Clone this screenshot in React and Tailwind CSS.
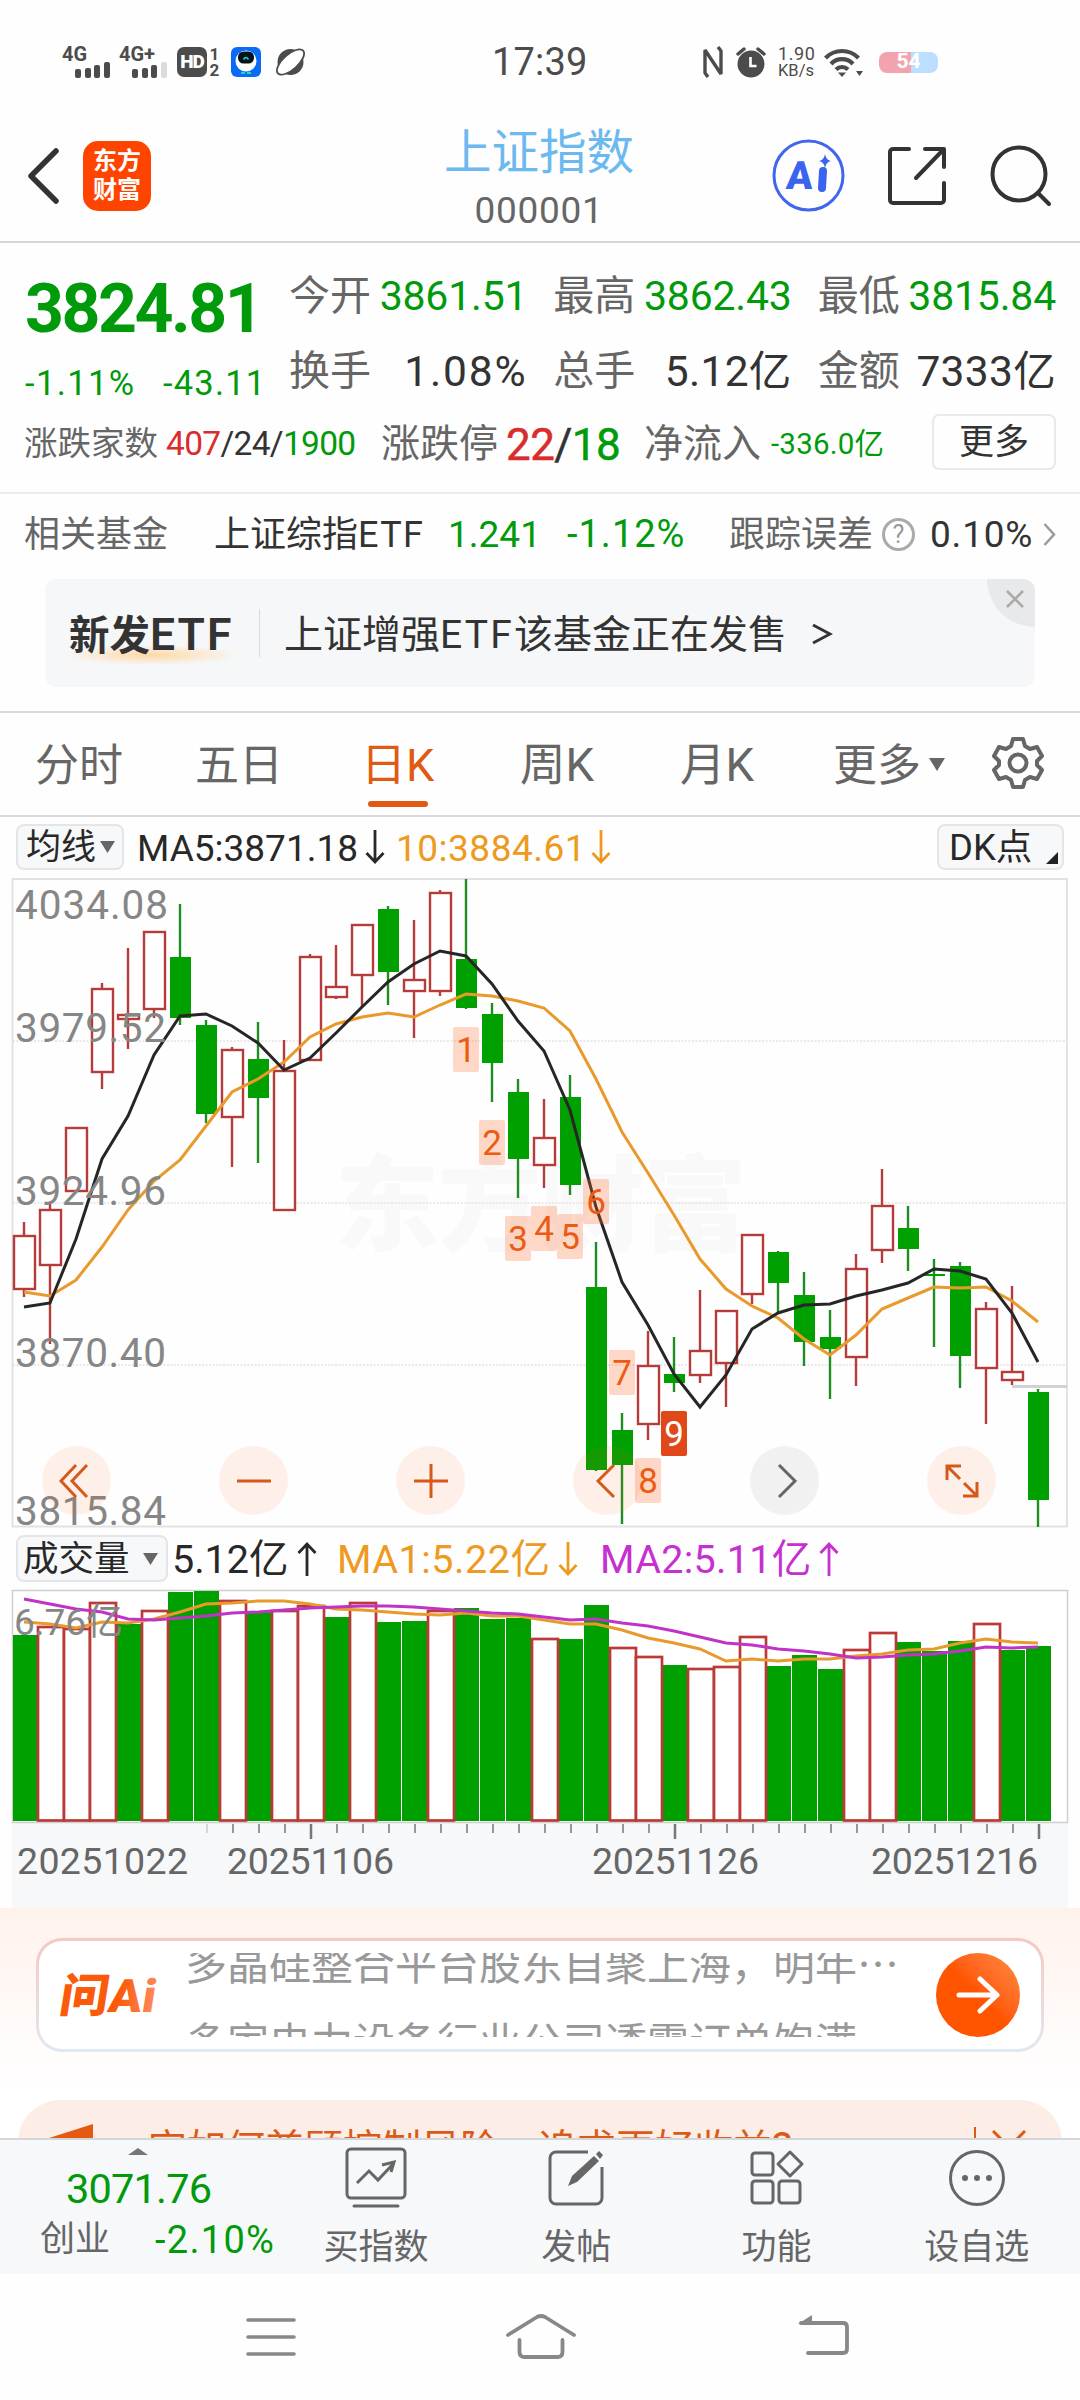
const STEP = 26;
const cx = (i) => 24 + STEP * i;

// [up, high, bodyTop, bodyBottom, low] in chart pixels
const candles = [
  [1, 1222, 1236, 1289, 1297], [1, 1203, 1210, 1265, 1344], [1, 1128, 1128, 1191, 1191],
  [1, 983, 989, 1072, 1089], [1, 948, 1015, 1019, 1049], [1, 932, 932, 1009, 1018],
  [0, 904, 957, 1018, 1025], [0, 1020, 1025, 1114, 1123], [1, 1047, 1050, 1117, 1167],
  [0, 1022, 1059, 1098, 1163], [1, 1040, 1071, 1210, 1210], [1, 954, 957, 1060, 1060],
  [1, 945, 987, 997, 999], [1, 924, 925, 975, 1007], [0, 906, 909, 972, 1005],
  [1, 920, 980, 991, 1038], [1, 890, 893, 991, 996], [0, 879, 959, 1008, 1009],
  [0, 1003, 1014, 1063, 1102], [0, 1079, 1092, 1159, 1198], [1, 1099, 1138, 1165, 1188],
  [0, 1075, 1097, 1185, 1195], [0, 1242, 1287, 1470, 1471], [0, 1413, 1430, 1465, 1524],
  [1, 1331, 1366, 1424, 1440], [0, 1337, 1374, 1383, 1392], [1, 1290, 1351, 1375, 1383],
  [1, 1310, 1311, 1363, 1407], [1, 1234, 1235, 1294, 1304], [0, 1251, 1252, 1283, 1313],
  [0, 1272, 1295, 1342, 1366], [0, 1310, 1337, 1349, 1399], [1, 1254, 1269, 1357, 1386],
  [1, 1169, 1206, 1250, 1263], [0, 1206, 1228, 1249, 1271], [0, 1259, 1274, 1276, 1347],
  [0, 1262, 1266, 1356, 1388], [1, 1302, 1309, 1368, 1424], [1, 1286, 1372, 1380, 1385],
  [0, 1389, 1392, 1500, 1527],
];

const ma5 = [1307, 1303, 1239, 1159, 1116, 1055, 1016, 1014, 1026, 1043, 1070, 1058, 1033, 1007, 982, 964, 951, 956, 984, 1021, 1051, 1110, 1207, 1282, 1325, 1374, 1407, 1375, 1329, 1313, 1305, 1304, 1296, 1290, 1283, 1269, 1271, 1279, 1313, 1362];
const ma10 = [1292, 1296, 1280, 1247, 1210, 1181, 1160, 1126, 1092, 1079, 1062, 1037, 1024, 1017, 1013, 1017, 1005, 994, 996, 1001, 1008, 1031, 1079, 1132, 1173, 1215, 1259, 1289, 1306, 1318, 1339, 1355, 1335, 1309, 1298, 1287, 1288, 1287, 1301, 1322];

const volumes = [
  [0, 1635], [1, 1627], [1, 1629], [1, 1603], [0, 1624], [1, 1611], [0, 1592], [0, 1591], [1, 1601], [0, 1612],
  [1, 1611], [1, 1606], [0, 1617], [1, 1603], [0, 1622], [0, 1621], [1, 1611], [0, 1608], [0, 1619], [0, 1618],
  [1, 1639], [0, 1639], [0, 1605], [1, 1648], [1, 1657], [0, 1665], [1, 1669], [1, 1667], [1, 1637], [0, 1666],
  [0, 1655], [0, 1669], [1, 1650], [1, 1633], [0, 1642], [0, 1651], [0, 1641], [1, 1624], [0, 1650], [0, 1646],
];
const volMa1 = [1622, 1624, 1628, 1622, 1623, 1619, 1612, 1604, 1603, 1601, 1601, 1604, 1609, 1610, 1612, 1614, 1615, 1613, 1616, 1616, 1620, 1624, 1624, 1630, 1638, 1643, 1649, 1661, 1659, 1661, 1659, 1659, 1656, 1654, 1650, 1649, 1643, 1639, 1642, 1643];
const volMa2 = [1599, 1604, 1609, 1612, 1619, 1620, 1618, 1616, 1613, 1612, 1610, 1608, 1607, 1606, 1606, 1607, 1609, 1611, 1613, 1614, 1617, 1620, 1619, 1623, 1626, 1631, 1637, 1643, 1645, 1649, 1651, 1654, 1658, 1657, 1655, 1654, 1651, 1647, 1648, 1647];

const line = (ys) => ys.map((y, i) => `${cx(i)},${y}`).join(" ");

const priceLabels = [["4034.08", 918.5], ["3979.52", 1042], ["3924.96", 1204.5], ["3870.40", 1366.5], ["3815.84", 1524.5]];
const marks = [[17, 1027], [18, 1120], [19, 1216], [20, 1206], [21, 1214], [22, 1179], [23, 1350], [24, 1458], [25, 1411]];
const dates = [["20251022", 17, 171], ["20251106", 227, 167], ["20251126", 592, 167], ["20251216", 871, 167]];

function Signal({ label, weak }) {
  return (
    <svg className="overflow-visible" width="50" height="32" viewBox="0 0 50 32" fill="#4c4c4c">
      <text x="0" y="15" fontSize="20" fontWeight="700" textLength={label.length > 2 ? 36 : 25} lengthAdjust="spacingAndGlyphs">{label}</text>
      <rect x="13" y="23" width="6" height="9" rx="2" />
      <rect x="23" y="22" width="6" height="10" rx="2" />
      <rect x="32" y="19" width="6" height="13" rx="2" />
      <rect x="42" y="16" width="6" height="16" rx="2" fill={weak ? "#dcdcdc" : "#4c4c4c"} />
    </svg>
  );
}

function StatusBar() {
  return (
    <div className="flex h-[124px] items-center pl-[62px] pr-[142px] text-[#4c4c4c]">
      <div className="flex w-[430px] items-center">
        <Signal label="4G" />
        <div className="ml-[7px]"><Signal label="4G+" weak /></div>
        <div className="ml-2 flex h-[30px] w-[30px] items-center justify-center rounded-[7px] bg-[#4c4c4c] text-[19px] font-black tracking-[-1px] text-white">HD</div>
        <div className="ml-[2px] w-[11px] text-center text-[17px] font-bold leading-[16px]">1<br />2</div>
        <svg className="ml-[11px]" width="30" height="30" viewBox="0 0 30 30">
          <rect width="30" height="30" rx="6" fill="#0a6cf5" />
          <circle cx="15" cy="14" r="10.500" fill="#fff" />
          <rect x="7" y="4.500" width="16" height="12" rx="5.500" fill="#06121c" />
          <path d="M12.500 12.500q2.500-4 5 0" fill="none" stroke="#18d8c8" strokeWidth="1.500" />
          <path d="M10 25h4v2h-4zM16 25h4v2h-4z" fill="#18d8c8" />
        </svg>
        <svg className="ml-[14px]" width="31" height="30" viewBox="0 0 31 30">
          <circle cx="15.500" cy="15" r="13" fill="#4c4c4c" />
          <ellipse cx="15.500" cy="15" rx="17" ry="7.500" transform="rotate(-42 15.500 15)" fill="#fff" stroke="#4c4c4c" strokeWidth="1.800" />
        </svg>
      </div>
      <span className="text-[38px] leading-none tracking-[0.200px]">17:39</span>
      <div className="ml-auto flex items-center">
        <svg width="20" height="32" viewBox="0 0 20 32" fill="none" stroke="#4c4c4c" strokeWidth="3.400">
          <path d="M5 31L2 27V4l16 24V5L15 1" strokeLinejoin="bevel" />
        </svg>
        <svg className="ml-[13px]" width="30" height="32" viewBox="0 0 30 32">
          <circle cx="15" cy="18" r="13.500" fill="#4c4c4c" />
          <path d="M2 8l6-5M28 8l-6-5" stroke="#4c4c4c" strokeWidth="3.500" strokeLinecap="round" />
          <path d="M14.500 11v9h6" fill="none" stroke="#fff" strokeWidth="2.600" />
        </svg>
        <div className="ml-[12px] w-[36px] text-center text-[18px] leading-[17px]">
          <div className="tracking-[0.600px]">1.90</div>
          <div className="text-[16.500px]">KB/s</div>
        </div>
        <svg className="ml-[10px]" width="40" height="30" viewBox="0 0 40 30" fill="none" stroke="#4c4c4c" strokeWidth="4.200">
          <path d="M1.500 11a23 23 0 0 1 33 0" />
          <path d="M7 17a15 15 0 0 1 22 0" />
          <path d="M12 22.500a8.500 8.500 0 0 1 12 0" />
          <path d="M14 25.500h8l-4 4.500z" fill="#4c4c4c" stroke="none" />
          <path d="M32 24h7l-3.500 5z" fill="#4c4c4c" stroke="none" />
        </svg>
        <div className="ml-[15px] flex h-[21px] w-[59px] items-center justify-center rounded-[8px] bg-linear-to-r from-[#f3a3b0] from-55% to-[#bddfff] to-55% text-[21px] font-bold text-white">54</div>
      </div>
    </div>
  );
}

function Header() {
  return (
    <header className="grid h-[119px] grid-cols-3 items-start border-b-2 border-[#d6d6d6]">
      <div className="flex h-[103px] items-center pl-[27px]">
        <svg width="32" height="56" viewBox="0 0 32 56" fill="none" stroke="#333" strokeWidth="5.500" strokeLinecap="round" strokeLinejoin="round">
          <path d="M29 3L4 28l25 25" />
        </svg>
        <div className="ml-[24px] flex h-[70px] w-[68px] flex-col items-center justify-center rounded-[15px] bg-[#ff4400] text-[24px] font-bold leading-[29px] text-white">
          <span>东方</span>
          <span>财富</span>
        </div>
      </div>
      <div className="mt-[3px] pr-[2px] text-center">
        <h1 className="text-[47.500px] leading-[52px] text-[#6cb9f0]">上证指数</h1>
        <p className="mt-[10px] text-[37px] leading-[44px] tracking-[0.700px] text-[#666]">000001</p>
      </div>
      <div className="flex h-[103px] items-center justify-end pr-[28px]">
        <svg className="mr-[1px]" width="73" height="73" viewBox="0 0 73 73">
          <circle cx="36.500" cy="36.500" r="34.500" fill="none" stroke="#3f66ec" strokeWidth="3" />
          <text x="14" y="50" fontSize="39" fontWeight="900" fill="#3a63f0" transform="skewX(-4) translate(3 0)">A</text>
          <path d="M51 32l-1 17" stroke="#3a63f0" strokeWidth="8" strokeLinecap="round" />
          <path d="M53 15q1 6 6 7q-5 1-6 7q-1-6-6-7q5-1 6-7z" fill="#3a63f0" />
        </svg>
        <svg className="ml-[42px]" width="58" height="58" viewBox="0 0 58 58" fill="none" stroke="#333" strokeWidth="4" strokeLinecap="round" strokeLinejoin="round">
          <path d="M21 2H5a3 3 0 0 0-3 3v48a3 3 0 0 0 3 3h48a3 3 0 0 0 3-3V36" />
          <path d="M37 2h19v18M55 3L28 31" />
        </svg>
        <svg className="ml-[44px]" width="62" height="62" viewBox="0 0 62 62" fill="none" stroke="#333" strokeWidth="4" strokeLinecap="round">
          <circle cx="29" cy="29" r="26.500" />
          <path d="M48 48l11 11" />
        </svg>
      </div>
    </header>
  );
}

function Stat({ label, value, green }) {
  return (
    <div className="flex h-[50px] items-center justify-between">
      <span className="text-[41px] text-[#666]">{label}</span>
      <span className={green ? "text-[41px] tracking-[-0.200px] text-[#009a0a]" : "text-[42.500px] tracking-[0.300px] text-[#333]"}>{value}</span>
    </div>
  );
}

function Quote() {
  return (
    <section className="h-[251px] border-b-2 border-[#ececec]">
      <div className="flex h-[171px]">
        <div className="w-[289px] pl-[25px] text-[#009a0a]">
          <div className="mt-[36px] text-[68px] font-bold leading-[60px] tracking-[-2.500px]">3824.81</div>
          <div className="mt-[22px] flex text-[34.500px] leading-[44px]">
            <span className="w-[138px] tracking-[1.400px]">-1.11%</span>
            <span className="tracking-[1.200px]">-43.11</span>
          </div>
        </div>
        <div className="mt-[29px] grid w-[767px] grid-cols-3 content-start gap-x-[26px] gap-y-[25px]">
          <Stat label="今开" value="3861.51" green />
          <Stat label="最高" value="3862.43" green />
          <Stat label="最低" value="3815.84" green />
          <Stat label="换手" value={<span className="tracking-[1.800px]">1.08%</span>} />
          <Stat label="总手" value="5.12亿" />
          <Stat label="金额" value="7333亿" />
        </div>
      </div>
      <div className="flex h-[56px] items-center pl-[24px] pr-[24px] text-[#666]">
        <span className="w-[142px] pt-[5px] text-[33.500px]">涨跌家数</span>
        <span className="w-[215px] pt-[5px] text-[33.500px] tracking-[-0.700px] text-[#333]">
          <span className="text-[#d92c2c]">407</span>/24/<span className="text-[#009a0a]">1900</span>
        </span>
        <span className="w-[125px] pt-[5px] text-[39px]">涨跌停</span>
        <span className="w-[138px] pt-[5px] text-[44px] tracking-[-0.600px] text-[#333] [-webkit-text-stroke:0.500px]">
          <span className="text-[#d92c2c]">22</span>/<span className="text-[#009a0a]">18</span>
        </span>
        <span className="w-[127px] pt-[5px] text-[39px]">净流入</span>
        <span className="pt-[5px] text-[29.500px] tracking-[0.200px] text-[#009a0a]">-336.0亿</span>
        <span className="ml-auto flex h-[56px] w-[124px] items-center justify-center rounded-[7px] border-2 border-[#e8e9eb] pt-[3px] text-[35px] text-[#333]">更多</span>
      </div>
    </section>
  );
}

function FundRow() {
  return (
    <section>
      <div className="flex h-[80px] items-center pl-[24px] pr-[24px] pt-[1px] text-[36px] text-[#333]">
        <span className="w-[190px] text-[#666]">相关基金</span>
        <span className="w-[234px]">上证综指<span className="tracking-[1.300px]">ETF</span></span>
        <span className="w-[119px] text-[37px] text-[#009a0a]">1.241</span>
        <span className="w-[162px] text-[38px] tracking-[1px] text-[#009a0a]">-1.12%</span>
        <span className="w-[153px] text-[#666]">跟踪误差</span>
        <span className="flex h-[33px] w-[33px] items-center justify-center rounded-full border-[3px] border-[#aaa] text-[25px] text-[#999]">?</span>
        <span className="ml-[15px] text-[37px] tracking-[0.800px]">0.10%</span>
        <svg className="ml-auto" width="13" height="25" viewBox="0 0 13 25" fill="none" stroke="#999" strokeWidth="2.500">
          <path d="M1.500 2l9.500 10.500L1.500 23" />
        </svg>
      </div>
      <div className="relative mx-[45px] mt-[5px] flex h-[108px] items-center overflow-hidden rounded-[12px] bg-[#f6f7f9] pl-[24px] text-[#333]">
        <div className="relative w-[190px] pt-[4px] text-[40.500px] font-bold">
          <div className="absolute bottom-[4px] left-[2px] h-[18px] w-[160px] bg-radial-[ellipse_at_center] from-[#ffd8a4] to-[#f6f7f9] to-80%" />
          <span className="relative">新发<span className="text-[44.500px] font-semibold tracking-[2px]">ETF</span></span>
        </div>
        <div className="h-[48px] w-px bg-[#dadada]" />
        <span className="ml-[24px] pt-[4px] text-[39px]">上证增强<span className="tracking-[2.200px]">ETF</span>该基金正在发售</span>
        <svg className="ml-[24px] mt-[2px]" width="22" height="22" viewBox="0 0 22 22" fill="none" stroke="#333" strokeWidth="3">
          <path d="M2 2l17 9-17 9" />
        </svg>
        <div className="absolute right-0 top-0 flex h-[48px] w-[48px] items-center justify-center rounded-bl-[48px] bg-[#e8e9ea] pb-[8px] pl-[8px]">
          <svg width="18" height="18" viewBox="0 0 18 18" stroke="#aaa" strokeWidth="2.500">
            <path d="M1 1l16 16M17 1L1 17" />
          </svg>
        </div>
      </div>
    </section>
  );
}

function Tabs() {
  return (
    <nav className="mt-[24px] flex h-[106px] items-center border-y-2 border-[#d9d9d9] pl-[35px] pr-[35px] text-[44px] text-[#666]">
      <span className="w-[160px] pt-[4px]">分时</span>
      <span className="w-[166px] pt-[4px]">五日</span>
      <span className="relative flex h-full w-[159px] items-center pt-[4px] text-[45px] text-[#e05a14]">
        日K
        <i className="absolute bottom-[8px] left-[7px] h-[6px] w-[60px] rounded-full bg-[#e05a14]" />
      </span>
      <span className="w-[160px] pt-[4px] text-[45.500px]">周K</span>
      <span className="w-[153px] pt-[4px] text-[45.500px]">月K</span>
      <span className="pt-[4px]">更多</span>
      <svg className="ml-[8px]" width="16" height="13" viewBox="0 0 16 13"><path d="M0 0h16L8 13z" fill="#666" /></svg>
      <svg className="ml-auto mb-[2px]" width="54" height="54" viewBox="0 0 54 54" fill="none" stroke="#666" strokeWidth="4" strokeLinejoin="round">
        <path d="M22 3h10l2 7 5 3 7-2 5 9-5 5v4l5 5-5 9-7-2-5 3-2 7H22l-2-7-5-3-7 2-5-9 5-5v-4l-5-5 5-9 7 2 5-3z" />
        <circle cx="27" cy="27" r="8.500" />
      </svg>
    </nav>
  );
}

function Arrow({ up }) {
  return (
    <svg className="shrink-0" width="20" height="36" viewBox="0 0 20 36" fill="none" stroke="currentColor" strokeWidth="2.800">
      <path d={up ? "M10 35V3M1.500 12L10 3l8.500 9" : "M10 1v32M1.500 24l8.500 9 8.500-9"} />
    </svg>
  );
}

function MaRow() {
  return (
    <div className="flex h-[60px] items-center pl-[16px] pr-[16px] text-[37px] text-[#282828]">
      <span className="flex h-[46px] w-[108px] items-center rounded-[8px] border-2 border-[#e3e5e8] bg-[#f7f8fa] pl-[8px] pt-[3px] text-[35px]">
        均线
        <svg className="ml-[4px] mb-[3px]" width="15" height="12" viewBox="0 0 15 12"><path d="M0 0h15L7.500 12z" fill="#666" /></svg>
      </span>
      <span className="ml-[13px] w-[228px] pt-[3px]">MA5:3871.18</span>
      <Arrow />
      <span className="ml-[11px] w-[195px] pt-[3px] tracking-[0.500px] text-[#ee9a20]">10:3884.61</span>
      <span className="text-[#ee9a20]"><Arrow /></span>
      <span className="relative ml-auto flex h-[46px] w-[127px] items-center rounded-[8px] border-2 border-[#e3e5e8] bg-[#f7f8fa] pl-[10px] pt-[3px] text-[36.500px]">
        DK点
        <svg className="absolute bottom-[4px] right-[4px]" width="12" height="12" viewBox="0 0 12 12"><path d="M12 0v12H0z" fill="#222" /></svg>
      </span>
    </div>
  );
}

function RoundButton({ gray, children }) {
  return (
    <div className={gray ? "flex h-[69px] w-[69px] items-center justify-center rounded-full bg-black/5" : "flex h-[69px] w-[69px] items-center justify-center rounded-full bg-[#ff5a0a]/[0.085]"}>
      <svg width="36" height="36" viewBox="0 0 36 36" fill="none" stroke={gray ? "#666" : "#d45a1c"} strokeWidth="3">
        {children}
      </svg>
    </div>
  );
}

function PriceChart() {
  return (
    <div className="relative h-[652px]">
      <svg width="1080" height="652" viewBox="0 877 1080 652">
        <text x="335" y="1243" fontSize="104" fontWeight="900" fill="#f9f9f9" textLength="412">东方财富</text>
        {[1041, 1203, 1365].map((y) => (
          <path key={y} d={`M13 ${y}H1067`} stroke="#e2e2e2" strokeWidth="1.500" strokeDasharray="2 1.500" />
        ))}
        <rect x="12.500" y="879" width="1054.500" height="647.500" fill="none" stroke="#e2e2e2" strokeWidth="2" />
        <path d="M1012 1386.500H1067" stroke="#cfd3d6" strokeWidth="3" />
        {candles.map(([up, hi, top, bottom, lo], i) => {
          const x = cx(i);
          return up ? (
            <g key={i} stroke="#b53c3a" strokeWidth="2.400">
              <path d={`M${x} ${hi}V${top}M${x} ${bottom}V${lo}`} />
              <rect x={x - 10} y={top} width="21" height={bottom - top} fill="#fff" />
            </g>
          ) : (
            <g key={i} fill="#00a000">
              <path d={`M${x} ${hi}V${lo}`} stroke="#1e8e22" strokeWidth="2.400" />
              <rect x={x - 10} y={top} width="21" height={bottom - top} />
            </g>
          );
        })}
        <polyline points={line(ma10)} fill="none" stroke="#e89a2c" strokeWidth="3" />
        <polyline points={line(ma5)} fill="none" stroke="#262626" strokeWidth="3" />
        {priceLabels.map(([t, y]) => (
          <text key={t} x="15" y={y} fontSize="40.500" fill="#868686" textLength={t === "4034.08" ? 153 : 151}>{t}</text>
        ))}
        {marks.map(([i, y], n) => (
          <g key={i}>
            <rect x={cx(i) - 13} y={y} width="26" height="45" rx="2" fill={n === 8 ? "#e0481a" : "#ff6a2a"} fillOpacity={n === 8 ? 1 : 0.26} />
            <text x={cx(i)} y={y + 35} fontSize="35" textAnchor="middle" fill={n === 8 ? "#fff" : "#ea5c14"}>{n + 1}</text>
          </g>
        ))}
      </svg>
      <div className="absolute left-[42px] top-[569px] flex gap-[108px]">
        <RoundButton><path d="M17 2L2 18l15 16M28 2L13 18l15 16" /></RoundButton>
        <RoundButton><path d="M1 18h34" /></RoundButton>
        <RoundButton><path d="M1 18h34M18 1v34" /></RoundButton>
        <RoundButton><path d="M24 2L8 18l16 16" /></RoundButton>
        <RoundButton gray><path d="M12 2l16 16-16 16" /></RoundButton>
        <RoundButton><path d="M3 17V3h14M3 3l13 13M33 19v14H19M33 33L20 20" /></RoundButton>
      </div>
    </div>
  );
}

function VolumeRow() {
  return (
    <div className="flex h-[59px] items-center pl-[16px] text-[39.500px] text-[#282828]">
      <span className="flex h-[47px] w-[152px] items-center rounded-[8px] border-2 border-[#e3e5e8] bg-[#f7f8fa] pl-[5px] pt-[3px] text-[35.500px]">
        成交量
        <svg className="ml-[13px] mb-[3px]" width="15" height="12" viewBox="0 0 15 12"><path d="M0 0h15L7.500 12z" fill="#666" /></svg>
      </span>
      <span className="ml-[4px] w-[125px] pt-[3px]">5.12亿</span>
      <Arrow up />
      <span className="ml-[20px] flex w-[243px] items-center text-[#ee9a20]">
        <span className="w-[221px] pt-[3px] tracking-[0.500px]">MA1:5.22亿</span>
        <Arrow />
      </span>
      <span className="ml-[20px] flex items-center text-[#c62fd0]">
        <span className="w-[219px] pt-[3px] tracking-[0.300px]">MA2:5.11亿</span>
        <Arrow up />
      </span>
    </div>
  );
}

function VolumeChart() {
  return (
    <svg className="block" width="1080" height="320" viewBox="0 1588 1080 320">
      <rect x="12" y="1823" width="1056" height="85" fill="#f7f8fa" />
      <rect x="12.500" y="1590.500" width="1055" height="232" fill="#fff" stroke="#cfcfcf" strokeWidth="1.500" />
      {volumes.map(([up, y], i) =>
        up ? null : <rect key={i} x={i ? cx(i) - 12 : 13} y={y} width={i ? 25 : 24} height={1821 - y} fill="#00a000" />
      )}
      {volumes.map(([up, y], i) =>
        up ? <rect key={i} x={cx(i) - 12} y={y} width="26" height={1820.5 - y} fill="#fff" stroke="#bb3a38" strokeWidth="2.700" /> : null
      )}
      <polyline points={line(volMa1)} fill="none" stroke="#e89a2c" strokeWidth="3" />
      <polyline points={line(volMa2)} fill="none" stroke="#c033c6" strokeWidth="3" />
      <text x="14" y="1635" fontSize="37" fill="#868686" textLength="109">6.76亿</text>
      {volumes.map((_, i) => {
        if (i < 7) return null;
        const major = i === 11 || i === 25 || i === 39;
        return <path key={i} d={`M${cx(i) + 1} 1824V${major ? 1839 : 1833}`} stroke={i === 7 ? "#ccc" : "#777"} strokeWidth={major ? 2.5 : 1.5} />;
      })}
      {dates.map(([d, x, w]) => (
        <text key={d} x={x} y="1873.500" fontSize="37.500" fill="#666" textLength={w}>{d}</text>
      ))}
    </svg>
  );
}

function AskAi() {
  return (
    <section className="h-[230px] overflow-hidden bg-linear-to-b from-[#fff2ed] to-white to-80% pt-[30px]">
      <div className="mx-[36px] h-[114px] rounded-[26px] bg-linear-to-b from-[#f4c9c0] to-[#e1e8f1] p-[3px]">
        <div className="flex h-full items-center rounded-[23px] bg-white pl-[15px] pr-[21px]">
          <svg className="overflow-visible" width="100" height="46" viewBox="0 0 100 46">
            <defs>
              <linearGradient id="ask" x1="0" x2="1"><stop offset="0.600" stopColor="#fa5a0a" /><stop offset="1" stopColor="#ff8a5c" /></linearGradient>
            </defs>
            <text x="10" y="40" fontSize="46" fontWeight="900" fill="url(#ask)" textLength="96" lengthAdjust="spacingAndGlyphs" transform="skewX(-9)">问Ai</text>
          </svg>
          <div className="ml-[31px] h-[84px] w-[720px] overflow-hidden whitespace-nowrap text-[42px] text-[#999]">
            <p className="-mt-[21px] h-[60px] leading-[60px]">多晶硅整合平台股东自聚上海，明年<span className="font-['Noto_Sans_CJK_SC']">⋯</span></p>
            <p className="mt-[22px] leading-[60px]">多家电力设备行业公司透露订单饱满</p>
          </div>
          <div className="ml-auto flex h-[84px] w-[84px] items-center justify-center rounded-full bg-linear-to-tr from-[#ff5500] from-50% to-[#ff8c40]">
            <svg width="44" height="40" viewBox="0 0 44 40" fill="none" stroke="#fff" strokeWidth="5" strokeLinecap="round" strokeLinejoin="round">
              <path d="M3 20h38M24 4l17 16-17 16" />
            </svg>
          </div>
        </div>
      </div>
      <div className="mx-[18px] mt-[48px] flex h-[90px] items-center rounded-[42px] bg-[#fceee6] pl-[28px] pr-[36px] text-[39px] text-[#db5a18]">
        <svg width="48" height="42" viewBox="0 0 48 42" fill="#e55a10"><path d="M47 0v42L22 32H0V14h3z" /></svg>
        <span className="ml-[54px] pt-[4px]">定如何兼顾控制风险，追求更好收益<span className="text-[43px]">?</span></span>
        <i className="ml-auto h-[36px] w-[2px] bg-[#db5a18]" />
        <svg className="ml-[16px] mt-[3px]" width="34" height="34" viewBox="0 0 34 34" fill="none" stroke="#db5a18" strokeWidth="3"><path d="M1 1l32 32M33 1L1 33" /></svg>
      </div>
    </section>
  );
}

function Tool({ label, children }) {
  return (
    <div className="flex flex-1 flex-col items-center">
      <svg className="mt-[7px]" width="64" height="64" viewBox="0 0 64 64" fill="none" stroke="#666" strokeWidth="3">{children}</svg>
      <span className="mt-[15px] text-[35px] leading-[44px]">{label}</span>
    </div>
  );
}

function BottomBar() {
  return (
    <div className="flex h-[136px] border-t-2 border-[#d4d6da] bg-[#f6f8fa] text-[#666]">
      <div className="w-[276px]">
        <svg className="ml-[128px] mt-[8px] block" width="20" height="7" viewBox="0 0 20 7"><path d="M0 7L10 0l10 7z" fill="#777" /></svg>
        <div className="ml-[66px] mt-[12px] text-[41.500px] leading-[44px] tracking-[-0.800px] text-[#009a0a]">3071.76</div>
        <div className="mt-[5px] flex items-center pl-[40px] leading-[48px]">
          <span className="w-[115px] text-[35px]">创业</span>
          <span className="text-[38px] tracking-[1.300px] text-[#009a0a]">-2.10%</span>
        </div>
      </div>
      <div className="flex w-[801px]">
        <Tool label="买指数">
          <rect x="3" y="2" width="58" height="49" rx="4" />
          <path d="M13 36l12-12 9 9 15-16M38 18l12-3-3 10" />
          <path d="M10 59h44" strokeLinecap="round" />
        </Tool>
        <Tool label="发帖">
          <path d="M44 5H12a6 6 0 0 0-6 6v40a6 6 0 0 0 6 6h40a6 6 0 0 0 6-6V20" />
          <path d="M24 39l4-10L50 9l5 5-22 21z" fill="#666" stroke="none" />
          <path d="M52 7l3-3 4 4-3 4z" fill="#666" stroke="none" />
        </Tool>
        <Tool label="功能">
          <rect x="7" y="6" width="21" height="22" rx="3" />
          <rect x="7" y="34" width="21" height="22" rx="3" />
          <rect x="34" y="34" width="21" height="22" rx="3" />
          <path d="M45 5l12 12-12 12-12-12z" strokeLinejoin="round" />
        </Tool>
        <Tool label="设自选">
          <circle cx="32" cy="31" r="26.500" />
          <g fill="#666" stroke="none"><circle cx="20" cy="31" r="3" /><circle cx="32" cy="31" r="3" /><circle cx="44" cy="31" r="3" /></g>
        </Tool>
      </div>
    </div>
  );
}

function SystemNav() {
  return (
    <div className="flex h-[126px] items-center pl-[246px] pr-[231px]">
      <svg width="50" height="44" viewBox="0 0 50 44" stroke="#888" strokeWidth="3.600" strokeLinecap="round"><path d="M2 5h46M2 22h46M2 39h46" /></svg>
      <svg className="ml-[210px]" width="70" height="46" viewBox="0 0 70 46" fill="none" stroke="#888" strokeWidth="3.800" strokeLinecap="round" strokeLinejoin="round">
        <path d="M2 21L31 3q4-2 8 0l29 18" />
        <path d="M13.500 26v12q0 5 5 5h33q5 0 5-5V26" />
      </svg>
      <svg className="ml-auto mb-[4px]" width="51" height="42" viewBox="0 0 51 42" fill="none" stroke="#888" strokeWidth="3.800" strokeLinecap="round">
        <path d="M3 9h42q4 0 4 4v22q0 4-4 4H10" />
        <path d="M0 10L14 1v8z" fill="#888" stroke="none" />
      </svg>
    </div>
  );
}

export default function App() {
  return (
    <div className="h-[2400px] w-[1080px] overflow-hidden whitespace-nowrap bg-[#fefefe] font-['Roboto','Noto_Sans_CJK_SC',sans-serif]">
      <StatusBar />
      <Header />
      <Quote />
      <FundRow />
      <Tabs />
      <MaRow />
      <PriceChart />
      <VolumeRow />
      <VolumeChart />
      <AskAi />
      <BottomBar />
      <SystemNav />
    </div>
  );
}
